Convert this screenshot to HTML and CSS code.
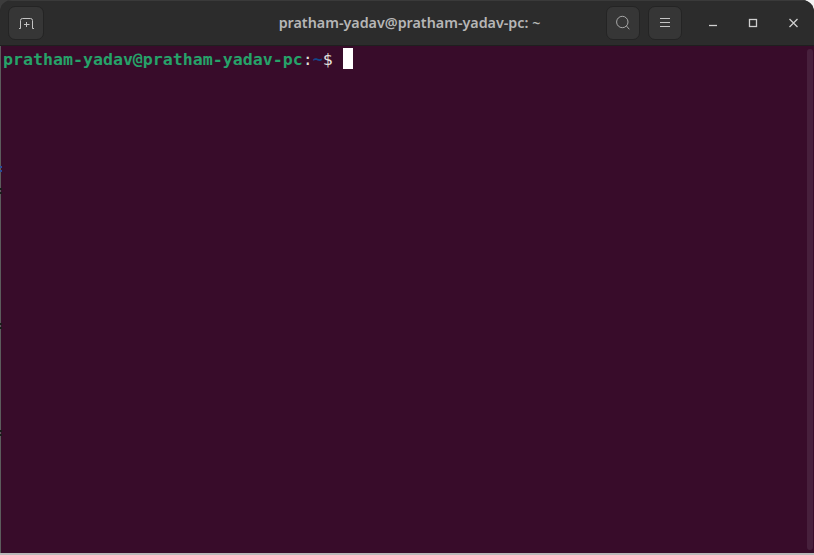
FILE: index.html
```html
<!DOCTYPE html>
<html lang="en">
<head>
<meta charset="utf-8">
<title>Terminal</title>
<link rel="stylesheet" href="styles.css">
</head>
<body>
<div class="window">
  <header class="titlebar">
    <button class="tool tool-wide" aria-label="New tab">
      <svg width="16" height="16" viewBox="0 0 16 16" class="icon"><path d="M1 13.500H2.500V5.500Q2.500 3.500 4.500 3.500H12.500Q14.500 3.500 14.500 5.500V13.500H16"/><path d="M8.500 7V12M6 9.500H11.500"/></svg>
    </button>
    <div class="title">pratham-yadav@pratham-yadav-pc: ~</div>
    <div class="side-right">
      <button class="tool" aria-label="Search">
        <svg width="16" height="16" viewBox="0 0 16 16" class="icon icon-dim"><circle cx="7.300" cy="7" r="5.700"/><path d="M11.500 11L14.300 14.300"/></svg>
      </button>
      <button class="tool" aria-label="Menu">
        <svg width="16" height="16" viewBox="0 0 16 16" class="icon"><path d="M3 3.500H13M3 7.500H13M3 11.500H13"/></svg>
      </button>
      <div class="controls">
        <span class="ctl-cell"><svg width="16" height="16" viewBox="0 0 16 16" class="ctl"><path d="M4 10.500H12"/></svg></span>
        <span class="ctl-cell"><svg width="16" height="16" viewBox="0 0 16 16" class="ctl"><rect x="4.500" y="4.500" width="7" height="7"/></svg></span>
        <span class="ctl-cell"><svg width="16" height="16" viewBox="0 0 16 16" class="ctl"><path d="M4.500 4L12.500 12M12.500 4L4.500 12"/></svg></span>
      </div>
    </div>
  </header>
  <main class="terminal">
    <div class="line"><span class="host">pratham-yadav@pratham-yadav-pc</span><span class="plain">:</span><span class="path">~</span><span class="plain">$ </span><span class="cursor"></span></div>
    <div class="scrollbar"></div>
  </main>
</div>
<i class="peek peek-a"></i>
<i class="peek peek-b"></i>
<i class="peek peek-c"></i>
<i class="peek peek-d"></i>
</body>
</html>
```
FILE: styles.css
```css
* { box-sizing: border-box; }
html, body { margin: 0; height: 100%; overflow: hidden; }
body {
  position: relative;
  background:
    linear-gradient(90deg, #3c3c3c 0 400px, #f4f4f4 400px) top / 100% 14px no-repeat,
    #b9b9b9;
}
.window {
  height: 553px;
  display: flex;
  flex-direction: column;
  border-radius: 12px 12px 0 0;
  overflow: hidden;
  background: #2c2c2c;
}
.titlebar {
  height: 46px;
  flex: none;
  display: flex;
  align-items: flex-start;
  justify-content: space-between;
  position: relative;
  background: #2c2c2c;
  border-top: 1px solid #3a3a3a;
  border-bottom: 1px solid #1f1f1f;
  padding: 5px 0 0 8px;
}
.side-right { display: flex; gap: 8px; align-items: flex-start; }
.tool {
  width: 34px;
  height: 34px;
  padding: 0;
  display: flex;
  align-items: center;
  justify-content: center;
  background: #363636;
  border: 1px solid #242424;
  border-radius: 7px;
}
.tool-wide { width: 36px; }
.icon { fill: none; stroke: #c4c4c4; stroke-width: 1; }
.icon-dim { stroke: #a8a8a8; }
.title {
  position: absolute;
  left: 0;
  right: 0;
  top: 12px;
  text-align: center;
  padding-left: 5px;
  color: #b6b6b6;
  font: 600 14.300px/20px "Noto Sans", sans-serif;
}
.controls { display: flex; margin: 1px 1px 0 3px; }
.ctl-cell { width: 40px; height: 32px; display: flex; align-items: center; justify-content: center; }
.ctl { fill: none; stroke: #d0d0d0; stroke-width: 1.300; }
.terminal {
  flex: 1;
  position: relative;
  background: #380c2a;
  border-left: 1px solid #5c5c5c;
  padding: 2px 0 0 2px;
}
.line {
  display: flex;
  align-items: flex-start;
  height: 21px;
  white-space: pre;
  font: bold 16.600px/24px "DejaVu Sans Mono", monospace;
}
.host { color: #26a269; }
.plain { color: #e2e1de; font-weight: normal; }
.path { color: #12488b; }
.cursor { width: 10px; height: 21px; background: #fff; }
.scrollbar {
  position: absolute;
  top: 3px;
  right: 1px;
  bottom: 3px;
  width: 6px;
  border-radius: 3px;
  background: #47203c;
}
.peek {
  position: absolute;
  left: 0;
  width: 2px;
  background: repeating-linear-gradient(#1c1c1c 0 2px, transparent 2px 4px);
}
.peek-a { top: 166px; height: 6px; background: repeating-linear-gradient(#2a4a9a 0 2px, transparent 2px 4px); }
.peek-b { top: 188px; height: 6px; }
.peek-c { top: 323px; height: 6px; }
.peek-d { top: 430px; height: 6px; }
```
